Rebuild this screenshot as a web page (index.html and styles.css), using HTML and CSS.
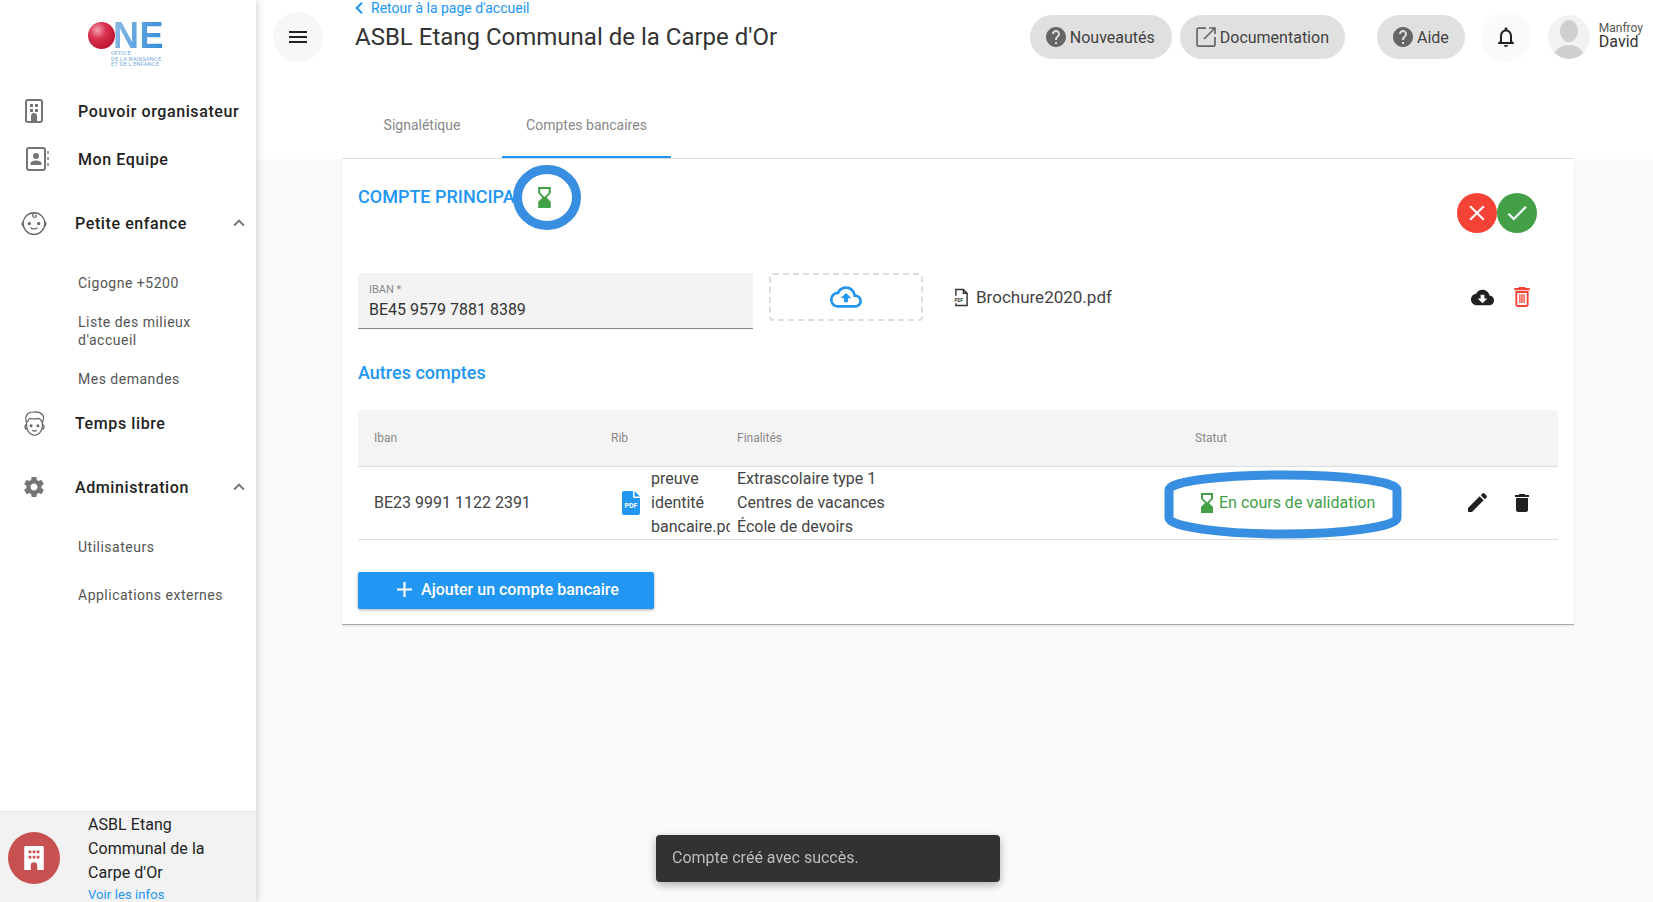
FILE: index.html
```html
<!DOCTYPE html>
<html lang="fr">
<head>
<meta charset="utf-8">
<title>ASBL Etang Communal de la Carpe d'Or</title>
<link rel="stylesheet" href="styles.css">
</head>
<body>
<aside class="sidebar">
  <div class="logo">
    <div class="logo-top"><span class="logo-ball"></span><span class="logo-ne">NE</span></div>
    <div class="logo-sub">OFFICE<br>DE LA NAISSANCE<br>ET DE L'ENFANCE</div>
  </div>
  <nav class="nav">
    <a class="nav-item plain">
      <svg class="nav-icon" viewBox="0 0 24 24"><rect x="4" y="1" width="16" height="22" rx="2" fill="none" stroke="#757575" stroke-width="2"/><path fill="#757575" d="M8 5h3v3H8zM13 5h3v3h-3zM8 10h3v3H8zM13 10h3v3h-3zM9 22v-5a3 3 0 0 1 6 0v5z"/></svg>
      <span class="nav-label">Pouvoir organisateur</span>
    </a>
    <a class="nav-item plain">
      <svg class="nav-icon contact" viewBox="0 0 24 24"><rect x="1" y="1" width="18" height="22" rx="2" fill="none" stroke="#757575" stroke-width="2"/><circle cx="10" cy="9" r="3" fill="#757575"/><path fill="#757575" d="M4.500 18v-1.500c0-2.200 3.500-3 5.500-3s5.500.8 5.500 3V18z"/><path stroke="#9e9e9e" stroke-width="2" d="M22 4v3M22 10v3M22 16v3"/></svg>
      <span class="nav-label">Mon Equipe</span>
    </a>
    <a class="nav-item group first-group">
      <svg class="nav-icon wide" viewBox="0 0 24 24" fill="none" stroke="#666" stroke-width="1.100"><circle cx="12" cy="12.500" r="9.300"/><path d="M2.800 11a2 2 0 0 0 0 3.500M21.200 11a2 2 0 0 1 0 3.500M12.500 3.200c-2.500 1-2 4 .2 4 1.500 0 1.600-2 .2-2"/><path d="M9 16c1.500 1.500 4.500 1.500 6 0"/><circle cx="8" cy="12.500" r=".9" fill="#666"/><circle cx="16" cy="12.500" r=".9" fill="#666"/></svg>
      <span class="nav-label">Petite enfance</span>
      <svg class="chev" viewBox="0 0 24 24"><path fill="#757575" d="M12 8l-6 6 1.410 1.410L12 10.830l4.590 4.580L18 14z"/></svg>
    </a>
    <a class="nav-sub sub-first">Cigogne +5200</a>
    <a class="nav-sub sub-second">Liste des milieux d'accueil</a>
    <a class="nav-sub sub-third">Mes demandes</a>
    <a class="nav-item group boy">
      <svg class="nav-icon wide-boy" viewBox="0 0 24 24" fill="none" stroke="#666" stroke-width="1.100"><path d="M5 10v4c0 5 3.500 8.500 7 8.500s7-3.500 7-8.500v-4"/><path d="M5 11c-1.500-3-1-8 4-9 3-.6 8-.6 10 2 1.500 2 1 5 0 7-1-2-2-3-3.500-3.500C12 8.500 8 7.500 7.500 7.500 7 8.500 6 10 5 11z"/><path d="M5 13c-2 0-2 4 .3 4M19 13c2 0 2 4-.3 4M10 18c1 .8 3 .8 4 0"/><circle cx="9" cy="14" r=".8" fill="#666"/><circle cx="15" cy="14" r=".8" fill="#666"/></svg>
      <span class="nav-label">Temps libre</span>
    </a>
    <a class="nav-item group admin">
      <svg class="nav-icon" viewBox="0 0 24 24"><path fill="#757575" d="M19.430 12.980c.04-.32.07-.64.07-.98s-.03-.66-.07-.98l2.110-1.650c.19-.15.24-.42.12-.64l-2-3.460c-.12-.22-.39-.3-.61-.22l-2.490 1c-.52-.4-1.080-.73-1.690-.98l-.38-2.650C14.460 2.180 14.250 2 14 2h-4c-.25 0-.46.18-.49.42l-.38 2.650c-.61.25-1.170.59-1.690.98l-2.490-1c-.23-.09-.49 0-.61.22l-2 3.460c-.13.22-.07.49.12.64l2.110 1.650c-.04.32-.07.65-.07.98s.03.66.07.98l-2.110 1.650c-.19.15-.24.42-.12.64l2 3.460c.12.22.39.3.61.22l2.490-1c.52.4 1.080.73 1.690.98l.38 2.650c.03.24.24.42.49.42h4c.25 0 .46-.18.49-.42l.38-2.650c.61-.25 1.170-.59 1.690-.98l2.490 1c.23.09.49 0 .61-.22l2-3.460c.12-.22.07-.49-.12-.64l-2.110-1.650zM12 15.500c-1.930 0-3.500-1.570-3.500-3.500s1.570-3.500 3.500-3.500 3.500 1.570 3.500 3.500-1.570 3.500-3.500 3.500z"/></svg>
      <span class="nav-label">Administration</span>
      <svg class="chev" viewBox="0 0 24 24"><path fill="#757575" d="M12 8l-6 6 1.410 1.410L12 10.830l4.590 4.580L18 14z"/></svg>
    </a>
    <a class="nav-sub sub-users">Utilisateurs</a>
    <a class="nav-sub sub-apps">Applications externes</a>
  </nav>
  <div class="org">
    <span class="org-badge">
      <svg viewBox="0 0 24 24" width="26" height="26"><path fill="#fff" d="M4 1h16a1 1 0 0 1 1 1v21h-6v-4a3 3 0 0 0-6 0v4H3V2a1 1 0 0 1 1-1z"/><path fill="#c75050" d="M7 5h2.500v2.500H7zM10.800 5h2.500v2.500h-2.500zM14.500 5H17v2.500h-2.500zM7 10h2.500v2.500H7zM10.800 10h2.500v2.500h-2.500zM14.500 10H17v2.500h-2.500z"/></svg>
    </span>
    <div class="org-text">
      <div class="org-name">ASBL Etang Communal de la Carpe d'Or</div>
      <a class="org-link">Voir les infos</a>
    </div>
  </div>
</aside>

<main class="main">
  <header class="head">
    <div class="topbar">
      <button class="menu-btn">
        <svg viewBox="0 0 24 24" width="24" height="24"><path fill="#212121" d="M3 18h18v-2H3v2zm0-5h18v-2H3v2zm0-7v2h18V6H3z"/></svg>
      </button>
      <div class="title-block">
        <a class="back">
          <svg viewBox="8 6 7.410 12" width="8" height="12"><path fill="#2196f3" d="M15.410 7.410L14 6l-6 6 6 6 1.410-1.410L10.830 12z"/></svg>
          <span>Retour à la page d'accueil</span>
        </a>
        <h1 class="title">ASBL Etang Communal de la Carpe d'Or</h1>
      </div>
      <div class="top-actions">
        <a class="pill">
          <svg viewBox="0 0 24 24" width="24" height="24"><path fill="#666" d="M12 2C6.480 2 2 6.480 2 12s4.480 10 10 10 10-4.480 10-10S17.520 2 12 2zm1 17h-2v-2h2v2zm2.070-7.750l-.9.920C13.450 12.900 13 13.500 13 15h-2v-.5c0-1.100.45-2.100 1.170-2.830l1.240-1.260c.37-.36.59-.86.59-1.410 0-1.100-.9-2-2-2s-2 .9-2 2H8c0-2.210 1.790-4 4-4s4 1.790 4 4c0 .88-.36 1.680-.93 2.250z"/></svg>
          <span>Nouveautés</span>
        </a>
        <a class="pill pill-doc">
          <svg viewBox="0 0 24 24" width="24" height="24" fill="none" stroke="#666" stroke-width="1.700"><path d="M12 3.200H4.500a1.500 1.500 0 0 0-1.500 1.500v15a1.500 1.500 0 0 0 1.500 1.500h15a1.500 1.500 0 0 0 1.500-1.500V12"/><path d="M10 14L21 3M15 3h6v6"/></svg>
          <span>Documentation</span>
        </a>
        <a class="pill pill-help">
          <svg viewBox="0 0 24 24" width="24" height="24"><path fill="#666" d="M12 2C6.480 2 2 6.480 2 12s4.480 10 10 10 10-4.480 10-10S17.520 2 12 2zm1 17h-2v-2h2v2zm2.070-7.750l-.9.920C13.450 12.900 13 13.500 13 15h-2v-.5c0-1.100.45-2.100 1.170-2.830l1.240-1.260c.37-.36.59-.86.59-1.410 0-1.100-.9-2-2-2s-2 .9-2 2H8c0-2.210 1.790-4 4-4s4 1.790 4 4c0 .88-.36 1.680-.93 2.250z"/></svg>
          <span>Aide</span>
        </a>
        <button class="bell">
          <svg viewBox="0 0 24 24" width="24" height="24"><path fill="#212121" d="M12 22c1.100 0 2-.9 2-2h-4c0 1.100.9 2 2 2zm6-6v-5c0-3.070-1.630-5.640-4.500-6.320V4c0-.83-.67-1.500-1.500-1.500s-1.500.67-1.500 1.500v.68C7.640 5.360 6 7.920 6 11v5l-2 2v1h16v-1l-2-2zm-2 1H8v-6c0-2.480 1.510-4.500 4-4.500s4 2.020 4 4.500v6z"/></svg>
        </button>
        <span class="avatar">
          <svg viewBox="0 0 42 44" width="42" height="44"><ellipse cx="21" cy="16" rx="9" ry="11" fill="#cfcfcf"/><ellipse cx="21" cy="44" rx="16" ry="14" fill="#cfcfcf"/></svg>
        </span>
        <div class="user">
          <div class="user-last">Manfroy</div>
          <div class="user-first">David</div>
        </div>
      </div>
    </div>
    <div class="tabs">
      <a class="tab tab-one">Signalétique</a>
      <a class="tab tab-two">Comptes bancaires</a>
    </div>
  </header>

  <section class="card">
    <div class="primary-head">
      <div class="primary-title">
        <h2 class="heading">COMPTE PRINCIPAL</h2>
        <svg class="ring" viewBox="0 0 68 65" width="68" height="65"><ellipse cx="34" cy="32.500" rx="29.500" ry="28" fill="#fff" stroke="#388ee0" stroke-width="9"/></svg>
        <svg class="hourglass ring-glass" viewBox="6 2 12 20" width="13" height="21"><path fill="#43a047" d="M18 22l-.01-6L14 12l3.990-4.010L18 2H6v6l4 4-4 3.990V22h12zM8 7.500V4h8v3.500l-4 4-4-4z"/></svg>
      </div>
      <div class="round-actions">
        <button class="round red"><svg viewBox="0 0 24 24" width="26" height="26"><path fill="#fff" d="M19 6.410L17.590 5 12 10.590 6.410 5 5 6.410 10.590 12 5 17.590 6.410 19 12 13.410 17.590 19 19 17.590 13.410 12z"/></svg></button>
        <button class="round green"><svg viewBox="0 0 24 24" width="26" height="26"><path fill="#fff" d="M9 16.170L4.830 12l-1.420 1.410L9 19 21 7l-1.410-1.410z"/></svg></button>
      </div>
    </div>

    <div class="primary-row">
      <div class="field">
        <label class="field-label">IBAN *</label>
        <div class="field-value">BE45 9579 7881 8389</div>
      </div>
      <div class="drop">
        <svg viewBox="0 0 24 24" width="32" height="32"><path fill="#2196f3" d="M19.350 10.040C18.670 6.590 15.640 4 12 4 9.110 4 6.600 5.640 5.350 8.040 2.340 8.360 0 10.910 0 14c0 3.310 2.690 6 6 6h13c2.760 0 5-2.240 5-5 0-2.640-2.050-4.780-4.650-4.960zM19 18H6c-2.210 0-4-1.790-4-4 0-2.050 1.530-3.760 3.560-3.970l1.070-.11.5-.95C8.080 7.140 9.940 6 12 6c2.620 0 4.880 1.860 5.390 4.430l.3 1.500 1.530.11c1.560.1 2.780 1.410 2.780 2.960 0 1.650-1.350 3-3 3zM8 13h2.550v3h2.900v-3H16l-4-4z"/></svg>
      </div>
      <div class="file">
        <svg viewBox="0 0 16 20" width="15" height="19"><path fill="none" stroke="#333" stroke-width="1.500" d="M2 8V1.500h8l4 4V18.500H2V16"/><path fill="none" stroke="#333" stroke-width="1.500" d="M10 1.500v4h4"/><text x="0.500" y="14.500" class="pdf-mini">PDF</text></svg>
        <span>Brochure2020.pdf</span>
      </div>
      <div class="file-actions">
        <svg viewBox="0 0 24 24" width="23" height="23"><path fill="#212121" d="M19.350 10.040C18.670 6.590 15.640 4 12 4 9.110 4 6.600 5.640 5.350 8.040 2.340 8.360 0 10.910 0 14c0 3.310 2.690 6 6 6h13c2.760 0 5-2.240 5-5 0-2.640-2.050-4.780-4.650-4.960zM17 13l-5 5-5-5h3V9h4v4h3z"/></svg>
        <svg viewBox="5 3 14 18" width="16" height="20"><path fill="none" stroke="#f44336" stroke-width="1.700" d="M6.900 7.500V19c0 .6.5 1.100 1.100 1.100h8c.6 0 1.100-.5 1.100-1.100V7.500z"/><path fill="#f44336" d="M19 4h-3.500l-1-1h-5l-1 1H5v2h14V4zM9.500 9.500h1.200v8H9.500zM11.400 9.500h1.200v8h-1.200zM13.300 9.500h1.200v8h-1.200z"/></svg>
      </div>
    </div>

    <h2 class="heading others">Autres comptes</h2>

    <table class="accounts">
      <colgroup><col class="c-iban"><col class="c-rib"><col class="c-fin"><col class="c-stat"><col class="c-act"></colgroup>
      <thead>
        <tr><th>Iban</th><th>Rib</th><th>Finalités</th><th>Statut</th><th></th></tr>
      </thead>
      <tbody>
        <tr>
          <td>BE23 9991 1122 2391</td>
          <td>
            <div class="rib">
              <svg viewBox="0 0 18 24" width="18" height="24"><path fill="#2196f3" d="M2 0h9v6a1 1 0 0 0 1 1h6v15a2 2 0 0 1-2 2H2a2 2 0 0 1-2-2V2a2 2 0 0 1 2-2z"/><path fill="#2196f3" d="M12.500 0L18 5.500h-5.500z"/><text x="9" y="17" class="pdf-badge">PDF</text></svg>
              <span class="rib-name">preuve identité bancaire.pdf</span>
            </div>
          </td>
          <td>Extrascolaire type 1<br>Centres de vacances<br>École de devoirs</td>
          <td class="status-cell">
            <div class="status">
              <svg class="hourglass" viewBox="6 2 12 20" width="14" height="20"><path fill="#43a047" d="M18 22l-.01-6L14 12l3.990-4.010L18 2H6v6l4 4-4 3.990V22h12zM8 7.500V4h8v3.500l-4 4-4-4z"/></svg>
              <span>En cours de validation</span>
            </div>
            <svg class="status-ring" viewBox="0 0 238 70" width="238" height="70"><path fill="none" stroke="#388ee0" stroke-width="9" d="M5 20C5 11 60 5 119 5s114 6 114 15v28c0 9-55 16-114 16S5 57 5 48z"/></svg>
          </td>
          <td>
            <div class="row-actions">
              <svg viewBox="3 3 18 18" width="19" height="19"><path fill="#212121" d="M3 17.250V21h3.750L17.810 9.940l-3.750-3.750L3 17.250zM20.710 7.040c.39-.39.39-1.020 0-1.410l-2.340-2.340c-.39-.39-1.020-.39-1.410 0l-1.830 1.830 3.750 3.750 1.830-1.830z"/></svg>
              <svg viewBox="5 3 14 18" width="14" height="18"><path fill="#212121" d="M6 19c0 1.100.9 2 2 2h8c1.100 0 2-.9 2-2V7H6v12zM19 4h-3.500l-1-1h-5l-1 1H5v2h14V4z"/></svg>
            </div>
          </td>
        </tr>
      </tbody>
    </table>

    <button class="add">
      <svg viewBox="5 5 14 14" width="15" height="15"><path fill="#fff" d="M19 13h-6v6h-2v-6H5v-2h6V5h2v6h6v2z"/></svg>
      <span>Ajouter un compte bancaire</span>
    </button>
  </section>
</main>

<div class="snackbar">Compte créé avec succès.</div>
</body>
</html>
```
FILE: styles.css
```css
* { box-sizing: border-box; }
html, body { margin: 0; padding: 0; }
body {
  width: 1653px;
  height: 902px;
  overflow: hidden;
  display: flex;
  background: #fafafa;
  font-family: Roboto, "Liberation Sans", sans-serif;
  color: #333;
  font-size: 16px;
}
button { border: 0; padding: 0; font-family: inherit; cursor: pointer; }
svg { display: block; flex: none; }

/* Sidebar */
.sidebar {
  width: 256px;
  flex: none;
  height: 902px;
  display: flex;
  flex-direction: column;
  background: #fff;
  box-shadow: 1px 0 8px rgba(0,0,0,.18);
  position: relative;
  z-index: 2;
}
.logo { padding: 22px 0 0 88px; height: 87px; }
.logo-top { display: flex; align-items: center; height: 27px; }
.logo-ball {
  width: 27px; height: 27px; border-radius: 50%;
  background: radial-gradient(circle at 35% 30%, #f3a0ae 0, #d9304e 35%, #b9102f 80%);
  flex: none;
}
.logo-ne {
  display: block;
  height: 27px;
  font-family: "Liberation Sans", sans-serif;
  font-weight: 700;
  font-size: 36px;
  line-height: 27px;
  letter-spacing: .5px;
  margin-left: -2px;
  background: linear-gradient(100deg, #8fbbe6, #2e8ad8);
  -webkit-background-clip: text;
  background-clip: text;
  color: transparent;
}
.logo-sub {
  margin: 2px 0 0 23px;
  font-size: 5.500px;
  line-height: 5.500px;
  letter-spacing: .3px;
  color: #6fa8dc;
  white-space: nowrap;
}
.nav { display: flex; flex-direction: column; }
.nav-item {
  height: 48px;
  display: flex;
  align-items: center;
  color: #222;
  font-weight: 500;
  font-size: 16px;
  letter-spacing: .6px;
  position: relative;
}
.nav-icon { width: 24px; height: 24px; margin-left: 22px; }
.nav-icon.contact { margin-left: 26px; }
.nav-icon.wide { width: 28px; height: 28px; margin-left: 20px; }
.nav-icon.wide-boy { width: 27px; height: 27px; margin-left: 21px; }
.nav-item.plain .nav-label { margin-left: 32px; }
.nav-item.plain .contact + .nav-label { margin-left: 28px; }
.nav-item.group .nav-label { margin-left: 29px; }
.nav-item.group .wide + .nav-label { margin-left: 27px; }
.nav-item.group .wide-boy + .nav-label { margin-left: 27px; }
.first-group { margin-top: 16px; }
.chev { width: 22px; height: 22px; position: absolute; left: 228px; top: 13px; }
.nav-sub {
  display: block;
  padding-left: 78px;
  padding-right: 26px;
  font-size: 14px;
  line-height: 18px;
  letter-spacing: .5px;
  color: #555;
}
.sub-first { margin-top: 27px; }
.sub-second { margin-top: 21px; }
.sub-third { margin-top: 21px; }
.boy { margin-top: 11px; }
.admin { margin-top: 16px; }
.sub-users { margin-top: 27px; }
.sub-apps { margin-top: 30px; }
.org {
  margin-top: auto;
  height: 91px;
  background: #f2f2f2;
  border-top: 1px solid #e4e4e4;
  display: flex;
  position: relative;
  padding-left: 8px;
}
.org-badge {
  width: 52px; height: 52px; border-radius: 50%;
  background: #c75050;
  display: flex; align-items: center; justify-content: center;
  margin-top: 20px;
  flex: none;
}
.org-text { margin-left: 28px; width: 130px; padding-top: 1px; }
.org-name { font-size: 16px; line-height: 24px; color: #222; letter-spacing: .05px; }
.org-link {
  display: block;
  font-size: 13px;
  line-height: 14px;
  letter-spacing: .1px;
  color: #2196f3;
  margin-top: 3px;
}

/* Header */
.main { flex: 1; min-width: 0; display: flex; flex-direction: column; }
.head { background: #fff; height: 159px; }
.topbar { height: 100px; display: flex; align-items: flex-start; padding-left: 17px; }
.menu-btn {
  width: 50px; height: 50px; border-radius: 50%;
  background: #f7f7f7;
  margin-top: 12px;
  display: flex; align-items: center; justify-content: center;
}
.title-block { margin-left: 32px; }
.back {
  display: flex; align-items: center;
  height: 16px;
  font-size: 14px;
  color: #2196f3;
  gap: 8px;
}
.title {
  margin: 7px 0 0;
  font-size: 24px;
  line-height: 28px;
  font-weight: 400;
  color: #333;
  white-space: nowrap;
}
.top-actions { margin-left: auto; display: flex; align-items: flex-start; padding-right: 10px; padding-top: 15px; }
.pill {
  height: 44px;
  border-radius: 22px;
  background: #e0e0e0;
  display: flex; align-items: center;
  padding: 0 17px 0 14px;
  gap: 2px;
  color: #424242;
  font-size: 16px;
  white-space: nowrap;
}
.pill-doc { margin-left: 8px; padding-right: 16px; }
.pill-help { margin-left: 32px; padding-right: 16px; }
.bell {
  width: 50px; height: 50px; border-radius: 50%;
  background: #fafafa;
  margin: -3px 0 0 16px;
  display: flex; align-items: center; justify-content: center;
}
.avatar {
  width: 42px; height: 44px; border-radius: 50%;
  background: #f2f2f2;
  margin-left: 17px;
  overflow: hidden;
  display: block;
}
.user { margin-left: 9px; padding-top: 7px; }
.user-last { font-size: 12px; line-height: 13px; color: #555; }
.user-first { font-size: 16px; line-height: 14px; color: #333; }
.tabs { margin-left: 86px; width: 1232px; height: 59px; border-bottom: 1px solid #ddd; display: flex; }
.tab {
  height: 58px;
  display: flex; align-items: center; justify-content: center;
  font-size: 14px;
  color: #888;
  padding-bottom: 6px;
  border-bottom: 2px solid transparent;
}
.tab-one { width: 160px; }
.tab-two { width: 169px; border-bottom-color: #2196f3; }

/* Card */
.card {
  margin-left: 86px;
  width: 1232px;
  height: 466px;
  background: #fff;
  padding: 0 16px;
  border-bottom: 1px solid #aaa;
  box-shadow: 0 1px 2px rgba(0,0,0,.1);
}
.primary-head { height: 114px; display: flex; justify-content: space-between; align-items: flex-start; }
.primary-title { position: relative; padding-top: 27px; }
.heading { margin: 0; font-size: 18px; line-height: 21px; font-weight: 500; color: #2196f3; }
.ring { position: absolute; left: 155px; top: 6px; }
.ring-glass { position: absolute; left: 180px; top: 28px; }
.round-actions { display: flex; margin-top: 34px; margin-right: 21px; }
.round { width: 40px; height: 40px; border-radius: 50%; display: flex; align-items: center; justify-content: center; }
.red { background: #f44336; }
.green { background: #43a047; }
.primary-row { display: flex; align-items: flex-start; height: 56px; }
.field {
  width: 395px; height: 56px;
  background: #f3f3f3;
  border-bottom: 1px solid #888;
  border-radius: 4px 4px 0 0;
  padding: 11px 11px 0;
}
.field-label { display: block; font-size: 11px; line-height: 12px; color: #888; }
.field-value { font-size: 16px; line-height: 20px; margin-top: 4px; color: #333; }
.drop {
  width: 154px; height: 48px;
  margin-left: 16px;
  border: 2px dashed #ddd;
  border-radius: 4px;
  display: flex; align-items: center; justify-content: center;
}
.file { display: flex; align-items: center; gap: 7px; margin-left: 31px; height: 48px; font-size: 17px; color: #444; }
.pdf-mini { font-size: 5px; font-weight: 700; fill: #333; }
.file-actions { margin-left: auto; height: 48px; display: flex; align-items: center; gap: 20px; padding-right: 28px; }
.others { margin-top: 33px; }
.accounts {
  margin-top: 27px;
  width: 1200px;
  border-collapse: collapse;
  table-layout: fixed;
  font-size: 16px;
}
.c-iban { width: 237px; }
.c-rib { width: 126px; }
.c-fin { width: 458px; }
.c-stat { width: 270px; }
.accounts th {
  height: 56px;
  padding: 0 0 0 16px;
  background: #f4f4f4;
  border-bottom: 1px solid #ddd;
  font-size: 12px;
  font-weight: 400;
  color: #888;
  text-align: left;
}
.accounts td {
  height: 73px;
  padding: 0 0 0 16px;
  border-bottom: 1px solid #ddd;
  line-height: 24px;
  color: #444;
  white-space: nowrap;
}
.rib { display: flex; align-items: center; gap: 11px; margin-left: 11px; }
.pdf-badge { font-size: 7px; font-weight: 700; fill: #fff; text-anchor: middle; }
.rib-name { flex: none; width: 79px; overflow: hidden; white-space: normal; height: 72px; display: block; }
.status-cell { position: relative; }
.accounts td.status-cell { padding-left: 21px; }
.status { display: flex; align-items: center; gap: 5px; color: #43a047; position: relative; z-index: 1; }
.status-ring { position: absolute; left: -15px; top: 3px; }
.row-actions { display: flex; align-items: center; gap: 28px; margin-left: 3px; }
.add {
  margin-top: 32px;
  width: 296px; height: 37px;
  background: #2196f3;
  color: #fff;
  border-radius: 2px;
  font-size: 16px;
  font-weight: 500;
  display: flex; align-items: center; justify-content: center;
  gap: 9px;
  padding: 0 0 2px 4px;
  box-shadow: 0 1px 3px rgba(0,0,0,.35);
}

/* Snackbar */
.snackbar {
  position: fixed;
  left: 656px; top: 835px;
  width: 344px; height: 47px;
  background: #323232;
  color: #bdbdbd;
  border-radius: 4px;
  padding: 0 16px;
  line-height: 46px;
  font-size: 16px;
  box-shadow: 0 3px 8px rgba(0,0,0,.3);
  z-index: 5;
}
```
